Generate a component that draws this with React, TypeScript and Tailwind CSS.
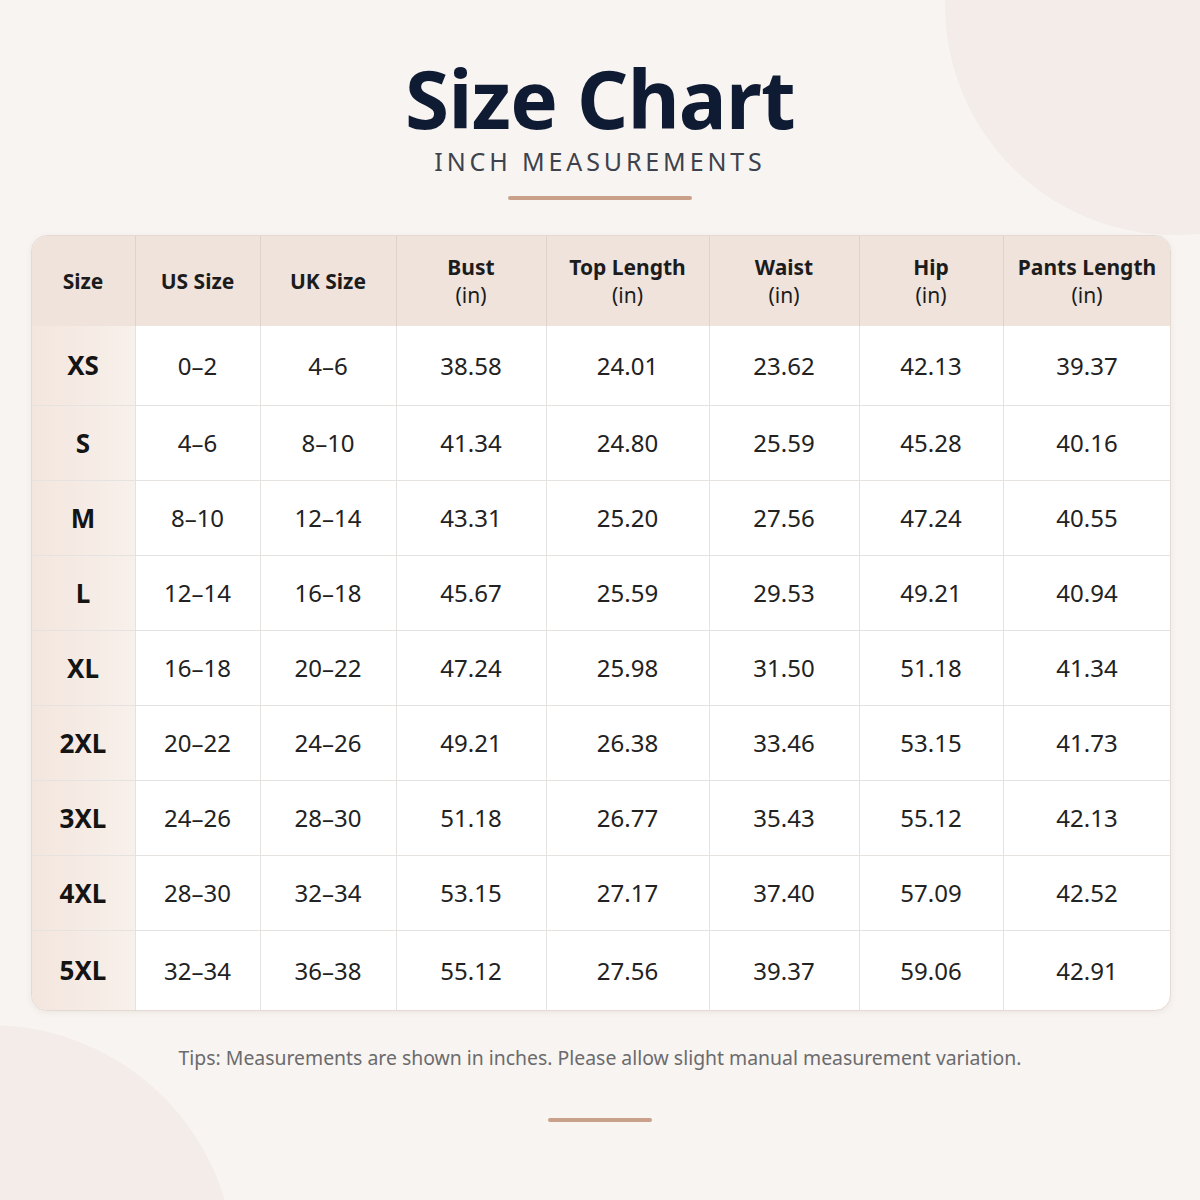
import React from 'react'

const font = { fontFamily: '"Noto Sans", "Open Sans", sans-serif' }

const headers: { title: string; unit?: string }[] = [
  { title: 'Size' },
  { title: 'US Size' },
  { title: 'UK Size' },
  { title: 'Bust', unit: '(in)' },
  { title: 'Top Length', unit: '(in)' },
  { title: 'Waist', unit: '(in)' },
  { title: 'Hip', unit: '(in)' },
  { title: 'Pants Length', unit: '(in)' },
]

const rows = [
  ['XS', '0–2', '4–6', '38.58', '24.01', '23.62', '42.13', '39.37'],
  ['S', '4–6', '8–10', '41.34', '24.80', '25.59', '45.28', '40.16'],
  ['M', '8–10', '12–14', '43.31', '25.20', '27.56', '47.24', '40.55'],
  ['L', '12–14', '16–18', '45.67', '25.59', '29.53', '49.21', '40.94'],
  ['XL', '16–18', '20–22', '47.24', '25.98', '31.50', '51.18', '41.34'],
  ['2XL', '20–22', '24–26', '49.21', '26.38', '33.46', '53.15', '41.73'],
  ['3XL', '24–26', '28–30', '51.18', '26.77', '35.43', '55.12', '42.13'],
  ['4XL', '28–30', '32–34', '53.15', '27.17', '37.40', '57.09', '42.52'],
  ['5XL', '32–34', '36–38', '55.12', '27.56', '39.37', '59.06', '42.91'],
]

const grid = 'grid grid-cols-[104px_125px_136px_150px_163px_150px_144px_167px]'

export default function App() {
  return (
    <div className="relative w-[1200px] h-[1200px] overflow-hidden bg-[#f8f4f1]" style={font}>
      {/* soft background circles */}
      <div className="absolute -right-[205px] -top-[225px] w-[460px] h-[460px] rounded-full bg-[#f4ece8]" />
      <div className="absolute -left-[255px] top-[1025px] w-[490px] h-[490px] rounded-full bg-[#f4ece8]" />

      <div className="relative flex flex-col items-center">
        <h1 className="mt-[58px] text-[80px] leading-[80px] font-bold tracking-[-0.01em] text-[#0f1b33]">
          Size Chart
        </h1>
        <p className="mt-[8px] text-[25px] leading-[30px] tracking-[0.155em] text-[#3d424c]">
          INCH MEASUREMENTS
        </p>
        <div className="mt-[20px] w-[184px] h-[4px] bg-[#c9a08a] rounded-sm" />

        <div className="mt-[35px] ml-[1px] w-[1140px] rounded-[16px] border border-[#e4dad4] overflow-hidden bg-white shadow-[0_2px_6px_rgba(120,90,70,0.08)]">
          <div className={`${grid} h-[90px] bg-[#efe3dc]`}>
            {headers.map((h, i) => (
              <div
                key={h.title}
                className={`flex flex-col items-center justify-center border-[#ded2cb] text-[#1c1c1c] ${
                  i < headers.length - 1 ? 'border-r' : ''
                }`}
              >
                <span className="text-[21px] leading-[28px] font-bold">{h.title}</span>
                {h.unit && <span className="text-[21px] leading-[28px]">{h.unit}</span>}
              </div>
            ))}
          </div>
          {rows.map((r, ri) => (
            <div
              key={r[0]}
              className={`${grid} ${ri === 0 ? 'h-[80px]' : ri === rows.length - 1 ? 'h-[79px]' : 'h-[75px]'} ${
                ri < rows.length - 1 ? 'border-b border-[#e5e2e0]' : ''
              }`}
            >
              {r.map((c, ci) => (
                <div
                  key={ci}
                  className={`flex items-center justify-center ${
                    ci < r.length - 1 ? 'border-r border-[#e5e2e0]' : ''
                  } ${
                    ci === 0
                      ? 'bg-gradient-to-r from-[#f3e6de] to-[#f8f0eb] text-[26px] font-bold text-[#141414]'
                      : 'text-[24px] text-[#222222]'
                  }`}
                >
                  {c}
                </div>
              ))}
            </div>
          ))}
        </div>

        <p className="mt-[33px] text-[19.4px] leading-[28px] text-[#6b6b6d]">
          Tips: Measurements are shown in inches. Please allow slight manual measurement variation.
        </p>
        <div className="mt-[46px] w-[104px] h-[4px] bg-[#c9a08a] rounded-sm" />
      </div>
    </div>
  )
}
